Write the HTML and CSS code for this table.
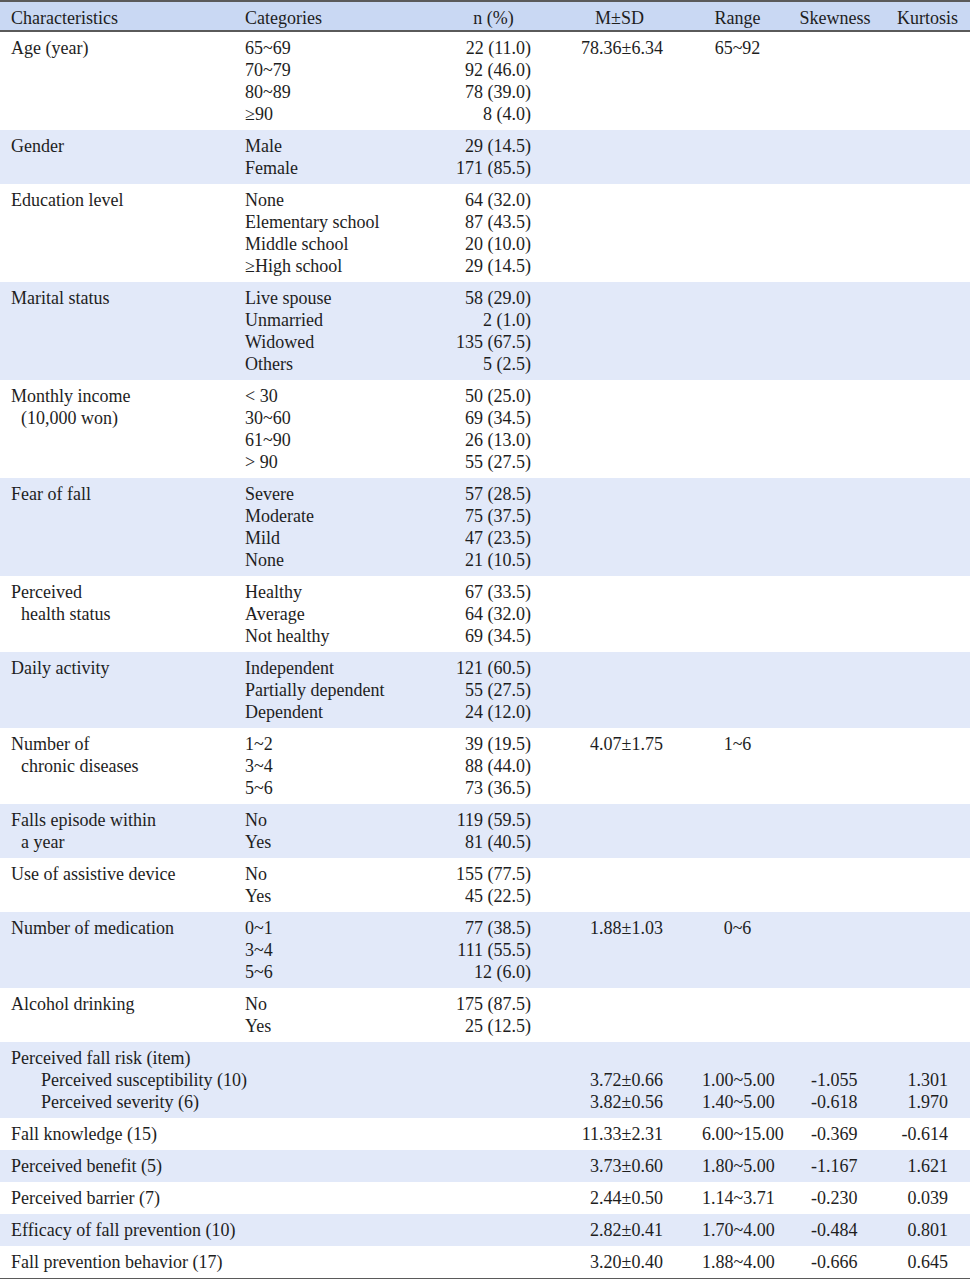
FILE: index.html
```html
<!DOCTYPE html>
<html>
<head>
<meta charset="utf-8">
<link rel="stylesheet" href="styles.css">
</head>
<body>
<table class="tbl">
  <colgroup>
    <col class="c1"><col class="c2"><col class="c3"><col class="c4"><col class="c5"><col class="c6"><col class="c7">
  </colgroup>
  <thead>
    <tr>
      <th class="h1">Characteristics</th>
      <th class="h2">Categories</th>
      <th class="h3">n (%)</th>
      <th class="h4">M±SD</th>
      <th class="h5">Range</th>
      <th class="h6">Skewness</th>
      <th class="h7">Kurtosis</th>
    </tr>
  </thead>
  <tbody>
    <tr>
      <td class="ch"><div>Age (year)</div></td>
      <td class="cat"><div>65~69</div><div>70~79</div><div>80~89</div><div>≥90</div></td>
      <td class="n"><div>22 (11.0)</div><div>92 (46.0)</div><div>78 (39.0)</div><div>8 (4.0)</div></td>
      <td class="msd"><div>78.36±6.34</div></td>
      <td class="rng"><div>65~92</div></td>
      <td class="sk"></td>
      <td class="ku"></td>
    </tr>
    <tr class="alt">
      <td class="ch"><div>Gender</div></td>
      <td class="cat"><div>Male</div><div>Female</div></td>
      <td class="n"><div>29 (14.5)</div><div>171 (85.5)</div></td>
      <td class="msd"></td><td class="rng"></td><td class="sk"></td><td class="ku"></td>
    </tr>
    <tr>
      <td class="ch"><div>Education level</div></td>
      <td class="cat"><div>None</div><div>Elementary school</div><div>Middle school</div><div>≥High school</div></td>
      <td class="n"><div>64 (32.0)</div><div>87 (43.5)</div><div>20 (10.0)</div><div>29 (14.5)</div></td>
      <td class="msd"></td><td class="rng"></td><td class="sk"></td><td class="ku"></td>
    </tr>
    <tr class="alt">
      <td class="ch"><div>Marital status</div></td>
      <td class="cat"><div>Live spouse</div><div>Unmarried</div><div>Widowed</div><div>Others</div></td>
      <td class="n"><div>58 (29.0)</div><div>2 (1.0)</div><div>135 (67.5)</div><div>5 (2.5)</div></td>
      <td class="msd"></td><td class="rng"></td><td class="sk"></td><td class="ku"></td>
    </tr>
    <tr>
      <td class="ch"><div>Monthly income</div><div class="ind">(10,000 won)</div></td>
      <td class="cat"><div>&lt; 30</div><div>30~60</div><div>61~90</div><div>&gt; 90</div></td>
      <td class="n"><div>50 (25.0)</div><div>69 (34.5)</div><div>26 (13.0)</div><div>55 (27.5)</div></td>
      <td class="msd"></td><td class="rng"></td><td class="sk"></td><td class="ku"></td>
    </tr>
    <tr class="alt">
      <td class="ch"><div>Fear of fall</div></td>
      <td class="cat"><div>Severe</div><div>Moderate</div><div>Mild</div><div>None</div></td>
      <td class="n"><div>57 (28.5)</div><div>75 (37.5)</div><div>47 (23.5)</div><div>21 (10.5)</div></td>
      <td class="msd"></td><td class="rng"></td><td class="sk"></td><td class="ku"></td>
    </tr>
    <tr>
      <td class="ch"><div>Perceived</div><div class="ind">health status</div></td>
      <td class="cat"><div>Healthy</div><div>Average</div><div>Not healthy</div></td>
      <td class="n"><div>67 (33.5)</div><div>64 (32.0)</div><div>69 (34.5)</div></td>
      <td class="msd"></td><td class="rng"></td><td class="sk"></td><td class="ku"></td>
    </tr>
    <tr class="alt">
      <td class="ch"><div>Daily activity</div></td>
      <td class="cat"><div>Independent</div><div>Partially dependent</div><div>Dependent</div></td>
      <td class="n"><div>121 (60.5)</div><div>55 (27.5)</div><div>24 (12.0)</div></td>
      <td class="msd"></td><td class="rng"></td><td class="sk"></td><td class="ku"></td>
    </tr>
    <tr>
      <td class="ch"><div>Number of</div><div class="ind">chronic diseases</div></td>
      <td class="cat"><div>1~2</div><div>3~4</div><div>5~6</div></td>
      <td class="n"><div>39 (19.5)</div><div>88 (44.0)</div><div>73 (36.5)</div></td>
      <td class="msd"><div>4.07±1.75</div></td>
      <td class="rng"><div>1~6</div></td>
      <td class="sk"></td><td class="ku"></td>
    </tr>
    <tr class="alt">
      <td class="ch"><div>Falls episode within</div><div class="ind">a year</div></td>
      <td class="cat"><div>No</div><div>Yes</div></td>
      <td class="n"><div>119 (59.5)</div><div>81 (40.5)</div></td>
      <td class="msd"></td><td class="rng"></td><td class="sk"></td><td class="ku"></td>
    </tr>
    <tr>
      <td class="ch"><div>Use of assistive device</div></td>
      <td class="cat"><div>No</div><div>Yes</div></td>
      <td class="n"><div>155 (77.5)</div><div>45 (22.5)</div></td>
      <td class="msd"></td><td class="rng"></td><td class="sk"></td><td class="ku"></td>
    </tr>
    <tr class="alt">
      <td class="ch"><div>Number of medication</div></td>
      <td class="cat"><div>0~1</div><div>3~4</div><div>5~6</div></td>
      <td class="n"><div>77 (38.5)</div><div>111 (55.5)</div><div>12 (6.0)</div></td>
      <td class="msd"><div>1.88±1.03</div></td>
      <td class="rng"><div>0~6</div></td>
      <td class="sk"></td><td class="ku"></td>
    </tr>
    <tr>
      <td class="ch"><div>Alcohol drinking</div></td>
      <td class="cat"><div>No</div><div>Yes</div></td>
      <td class="n"><div>175 (87.5)</div><div>25 (12.5)</div></td>
      <td class="msd"></td><td class="rng"></td><td class="sk"></td><td class="ku"></td>
    </tr>
    <tr class="alt">
      <td class="ch wide" colspan="3"><div>Perceived fall risk (item)</div><div class="ind2">Perceived susceptibility (10)</div><div class="ind2">Perceived severity (6)</div></td>
      <td class="msd"><div>&nbsp;</div><div>3.72±0.66</div><div>3.82±0.56</div></td>
      <td class="rng lft"><div>&nbsp;</div><div>1.00~5.00</div><div>1.40~5.00</div></td>
      <td class="sk"><div>&nbsp;</div><div>-1.055</div><div>-0.618</div></td>
      <td class="ku"><div>&nbsp;</div><div>1.301</div><div>1.970</div></td>
    </tr>
    <tr>
      <td class="ch wide" colspan="3"><div>Fall knowledge (15)</div></td>
      <td class="msd"><div>11.33±2.31</div></td>
      <td class="rng lft"><div>6.00~15.00</div></td>
      <td class="sk"><div>-0.369</div></td>
      <td class="ku"><div>-0.614</div></td>
    </tr>
    <tr class="alt">
      <td class="ch wide" colspan="3"><div>Perceived benefit (5)</div></td>
      <td class="msd"><div>3.73±0.60</div></td>
      <td class="rng lft"><div>1.80~5.00</div></td>
      <td class="sk"><div>-1.167</div></td>
      <td class="ku"><div>1.621</div></td>
    </tr>
    <tr>
      <td class="ch wide" colspan="3"><div>Perceived barrier (7)</div></td>
      <td class="msd"><div>2.44±0.50</div></td>
      <td class="rng lft"><div>1.14~3.71</div></td>
      <td class="sk"><div>-0.230</div></td>
      <td class="ku"><div>0.039</div></td>
    </tr>
    <tr class="alt">
      <td class="ch wide" colspan="3"><div>Efficacy of fall prevention (10)</div></td>
      <td class="msd"><div>2.82±0.41</div></td>
      <td class="rng lft"><div>1.70~4.00</div></td>
      <td class="sk"><div>-0.484</div></td>
      <td class="ku"><div>0.801</div></td>
    </tr>
    <tr>
      <td class="ch wide" colspan="3"><div>Fall prevention behavior (17)</div></td>
      <td class="msd"><div>3.20±0.40</div></td>
      <td class="rng lft"><div>1.88~4.00</div></td>
      <td class="sk"><div>-0.666</div></td>
      <td class="ku"><div>0.645</div></td>
    </tr>
  </tbody>
</table>
</body>
</html>
```

FILE: styles.css
```css
html, body {
  margin: 0;
  padding: 0;
  background: #ffffff;
}
body {
  font-family: "Liberation Serif", "Times New Roman", serif;
  font-size: 18px;
  line-height: 22px;
  color: #1e1e1e;
}
.tbl {
  width: 970px;
  border-collapse: collapse;
  table-layout: fixed;
  border-top: 2px solid #5a5a5a;
  border-bottom: 2px solid #5a5a5a;
}
.c1 { width: 235px; }
.c2 { width: 185px; }
.c3 { width: 121px; }
.c4 { width: 149px; }
.c5 { width: 95px; }
.c6 { width: 100px; }
.c7 { width: 85px; }

thead tr {
  background: #c9d8f3;
  border-bottom: 2px solid #5a5a5a;
}
th {
  font-weight: normal;
  padding: 5px 0 1px;
  white-space: nowrap;
}
.h1 { text-align: left; padding-left: 11px; }
.h2 { text-align: left; padding-left: 10px; }
.h3 { text-align: center; padding-left: 26px; }
.h4 { text-align: center; padding-left: 8px; }
.h5 { text-align: center; }
.h6 { text-align: center; }
.h7 { text-align: center; padding-left: 0; }

td {
  padding: 5px 0;
  vertical-align: top;
  white-space: nowrap;
}
tr.alt { background: #e2e9f9; }

.ch { padding-left: 11px; }
.ind { padding-left: 10px; }
.ind2 { padding-left: 30px; }
.cat { padding-left: 10px; }
.n { text-align: right; padding-right: 10px; }
.msd { text-align: right; padding-right: 27px; }
.rng { text-align: center; }
.rng.lft { text-align: left; padding-left: 12px; }
.sk { text-align: left; padding-left: 26px; }
.ku { text-align: right; padding-right: 22px; }
```
